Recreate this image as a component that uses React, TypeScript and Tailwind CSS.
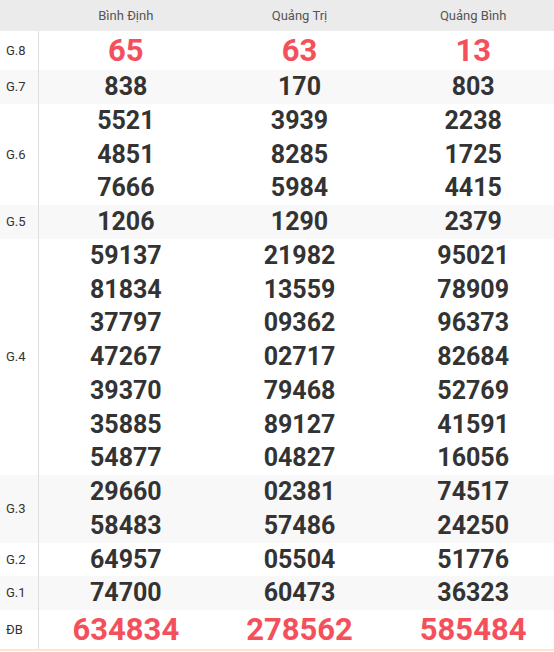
const provinces = ["Bình Định", "Quảng Trị", "Quảng Bình"];

type Prize = { label: string; big?: boolean; values: string[][] };

const prizes: Prize[] = [
  { label: "G.8", big: true, values: [["65"], ["63"], ["13"]] },
  { label: "G.7", values: [["838"], ["170"], ["803"]] },
  {
    label: "G.6",
    values: [
      ["5521", "4851", "7666"],
      ["3939", "8285", "5984"],
      ["2238", "1725", "4415"],
    ],
  },
  { label: "G.5", values: [["1206"], ["1290"], ["2379"]] },
  {
    label: "G.4",
    values: [
      ["59137", "81834", "37797", "47267", "39370", "35885", "54877"],
      ["21982", "13559", "09362", "02717", "79468", "89127", "04827"],
      ["95021", "78909", "96373", "82684", "52769", "41591", "16056"],
    ],
  },
  {
    label: "G.3",
    values: [
      ["29660", "58483"],
      ["02381", "57486"],
      ["74517", "24250"],
    ],
  },
  { label: "G.2", values: [["64957"], ["05504"], ["51776"]] },
  { label: "G.1", values: [["74700"], ["60473"], ["36323"]] },
  { label: "ĐB", big: true, values: [["634834"], ["278562"], ["585484"]] },
];

export default function App() {
  return (
    <div
      className="w-[554px] overflow-hidden bg-white"
      style={{ fontFamily: "Roboto, 'Liberation Sans', sans-serif" }}
    >
      <div className="w-[560px] border-b-2 border-[#fce6d2]">
        <div className="grid grid-cols-[39px_1fr_1fr_1fr] h-[31px] bg-[#ebebeb] text-[13px] text-[#555] items-center">
          <div />
          {provinces.map((p) => (
            <div key={p} className="text-center">
              {p}
            </div>
          ))}
        </div>
        {prizes.map((prize, i) => (
          <div
            key={prize.label}
            className={
              "grid grid-cols-[39px_1fr_1fr_1fr] " +
              (i % 2 === 1 ? "bg-[#f8f8f8]" : "bg-white")
            }
          >
            <div className="border-r border-[#dedede] flex items-center pl-[6px] text-[13px] text-[#333]">
              {prize.label}
            </div>
            {prize.values.map((col, ci) => (
              <div key={ci} className="flex flex-col items-center font-bold">
                {col.map((v) =>
                  prize.big ? (
                    <div key={v} className="text-[31px] leading-[39px] text-[#f4505c]">
                      {v}
                    </div>
                  ) : (
                    <div key={v} className="text-[25px] leading-[33.75px] text-[#333]">
                      {v}
                    </div>
                  )
                )}
              </div>
            ))}
          </div>
        ))}
      </div>
    </div>
  );
}
